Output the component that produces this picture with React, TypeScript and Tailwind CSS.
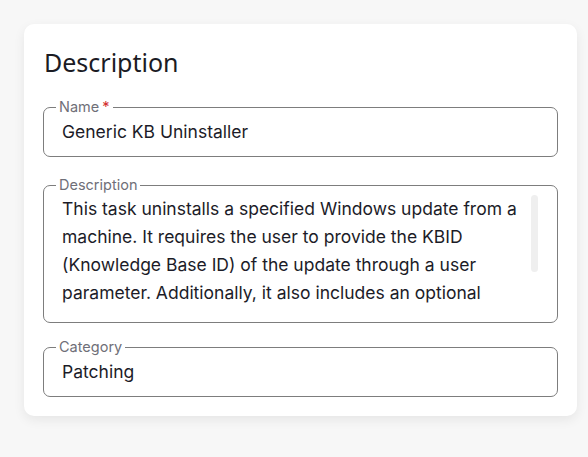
import { ReactNode } from 'react';

type FieldProps = {
  label: string;
  required?: boolean;
  className?: string;
  children: ReactNode;
};

function Field({ label, required, className = '', children }: FieldProps) {
  return (
    <fieldset className={`rounded-[7px] border border-[#7d7d7d] p-0 ${className}`}>
      <legend className="ml-[12px] px-[3px] text-[14.5px] leading-4 text-[#6f6f78]">
        {label}
        {required && <span className="ml-[3px] text-[#d32f2f]">*</span>}
      </legend>
      {children}
    </fieldset>
  );
}

export default function App() {
  const description =
    'This task uninstalls a specified Windows update from a machine. It requires the user to provide the KBID (Knowledge Base ID) of the update through a user parameter. Additionally, it also includes an optional parameter that lets the machine reboot once the uninstall is complete.';

  return (
    <div className="min-h-[457px] bg-[#f7f7f7] pt-6 font-['Inter',sans-serif]">
      <div className="ml-6 w-[553px] rounded-[10px] bg-white px-[19px] pb-[19px] pt-[22px] shadow-[0_4px_12px_rgba(0,0,0,0.07)]">
        <h2 className="pl-px font-['Noto_Sans',sans-serif] text-[25px] leading-8 text-[#1b1b24]">Description</h2>

        <Field label="Name" required className="mt-[21px]">
          <div className="pb-[12px] pl-[18px] pr-4 pt-[5px] text-[17.5px] leading-6 text-[#1c1c28]">
            Generic KB Uninstaller
          </div>
        </Field>

        <Field label="Description" className="mt-5">
          <div className="relative pb-[13px] pl-[18px] pr-[32px] pt-[2px]">
            <div className="h-[114px] overflow-hidden text-[17.5px] leading-7 text-[#1c1c28]">{description}</div>
            <div className="absolute right-[19px] top-[2px] h-[77px] w-[7px] rounded-full bg-[#efefef]" />
          </div>
        </Field>

        <Field label="Category" className="mt-[16px]">
          <div className="pb-[12px] pl-[18px] pr-4 pt-[5px] text-[17.5px] leading-6 text-[#1c1c28]">Patching</div>
        </Field>
      </div>
    </div>
  );
}
